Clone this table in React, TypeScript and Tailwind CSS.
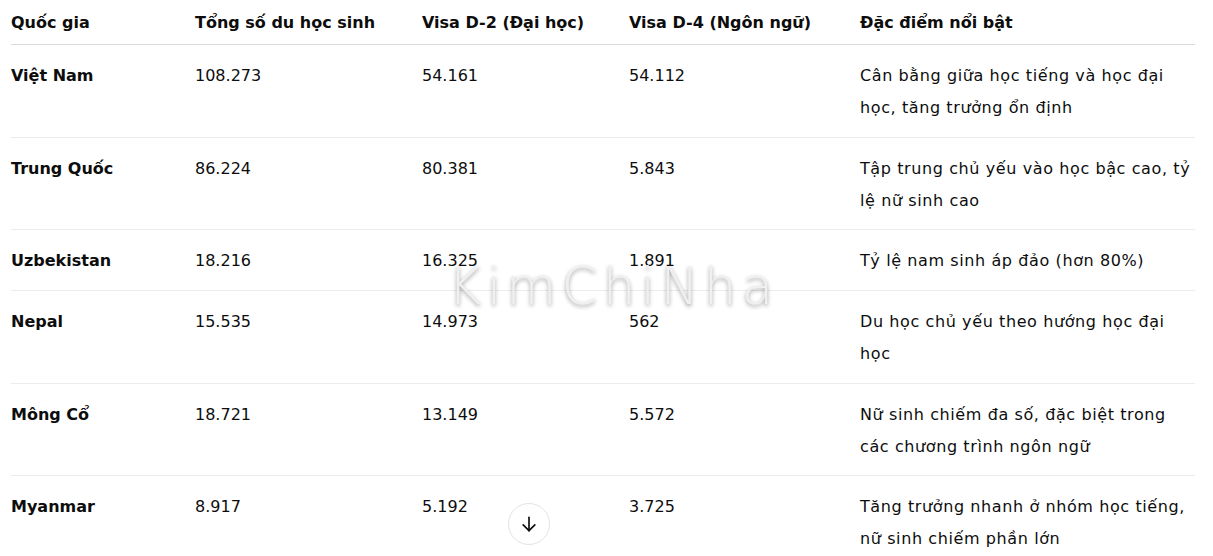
import React from "react";

const rows = [
  ["Việt Nam", "108.273", "54.161", "54.112", "Cân bằng giữa học tiếng và học đại học, tăng trưởng ổn định"],
  ["Trung Quốc", "86.224", "80.381", "5.843", "Tập trung chủ yếu vào học bậc cao, tỷ lệ nữ sinh cao"],
  ["Uzbekistan", "18.216", "16.325", "1.891", "Tỷ lệ nam sinh áp đảo (hơn 80%)"],
  ["Nepal", "15.535", "14.973", "562", "Du học chủ yếu theo hướng học đại học"],
  ["Mông Cổ", "18.721", "13.149", "5.572", "Nữ sinh chiếm đa số, đặc biệt trong các chương trình ngôn ngữ"],
  ["Myanmar", "8.917", "5.192", "3.725", "Tăng trưởng nhanh ở nhóm học tiếng, nữ sinh chiếm phần lớn"],
];

export default function App() {
  return (
    <div
      className="relative w-[1213px] h-[556px] overflow-hidden bg-white text-[#0d0d0d]"
      style={{ fontFamily: '"DejaVu Sans", "Noto Sans CJK KR", sans-serif' }}
    >
      <div className="pl-[11px] pr-[18px]">
        <table className="w-[1184px] table-fixed border-collapse text-[16px] leading-8">
          <colgroup>
            <col className="w-[184px]" />
            <col className="w-[227px]" />
            <col className="w-[207px]" />
            <col className="w-[231px]" />
            <col className="w-[335px]" />
          </colgroup>
          <thead>
            <tr className="border-b border-[#d9d9d9]">
              {["Quốc gia", "Tổng số du học sinh", "Visa D-2 (Đại học)", "Visa D-4 (Ngôn ngữ)", "Đặc điểm nổi bật"].map((h) => (
                <th key={h} className="text-left font-bold pt-[7px] pb-[5px] pr-2 align-top whitespace-nowrap">
                  {h}
                </th>
              ))}
            </tr>
          </thead>
          <tbody>
            {rows.map((r, i) => (
              <tr key={i} className={i < rows.length - 1 ? "border-b border-[#ececec]" : ""}>
                {r.map((c, j) => (
                  <td
                    key={j}
                    className={`pt-[15px] pb-[12.7px] align-top ${j === 4 ? "pr-0 tracking-[0.6px]" : "pr-2"} ${j === 0 ? "font-bold" : ""}`}
                  >
                    {c}
                  </td>
                ))}
              </tr>
            ))}
          </tbody>
        </table>
      </div>

      <div
        className="pointer-events-none absolute left-[448px] top-[261px] text-[51px] font-extralight leading-none tracking-[5.5px] text-[#f0f0f0]"
        style={{ fontFamily: '"DejaVu Sans", sans-serif', textShadow: "0px 2px 4px rgba(0,0,0,0.4)" }}
      >
        KimChiNha
      </div>

      <div className="absolute left-[508px] top-[503px] flex h-[42px] w-[42px] items-center justify-center rounded-full border border-[#e3e3e3] bg-white">
        <svg width="20" height="20" viewBox="0 0 24 24" fill="none" stroke="#0d0d0d" strokeWidth="2" strokeLinecap="round" strokeLinejoin="round">
          <path d="M12 4v16" />
          <path d="M5 13l7 7 7-7" />
        </svg>
      </div>
    </div>
  );
}
